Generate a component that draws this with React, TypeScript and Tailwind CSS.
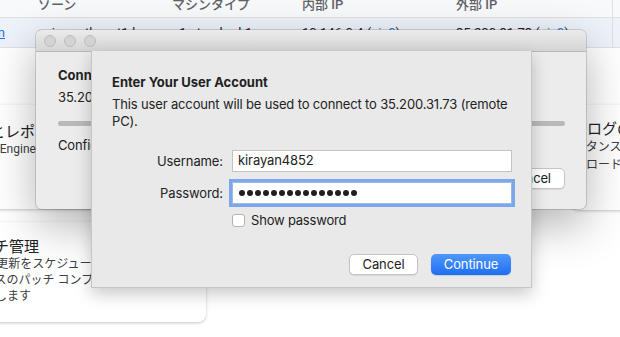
export default function App() {
  const dots = Array.from({ length: 15 });

  return (
    <div className="relative w-[620px] h-[337px] overflow-hidden bg-white font-['Roboto','Noto_Sans_CJK_JP',sans-serif]">
      {/* background console table */}
      <div className="grid grid-cols-[38px_134px_130px_154px_156px_1fr] h-[18px] items-start bg-[#f8f9fa] border-b border-[#e0e0e0] text-[13px] font-medium text-[#5f6368]">
        <div />
        <div className="-mt-[2px] leading-[14px]">ゾーン</div>
        <div className="-mt-[2px] leading-[14px]">マシンタイプ</div>
        <div className="-mt-[2px] leading-[14px]">内部 IP</div>
        <div className="-mt-[2px] leading-[14px]">外部 IP</div>
        <div className="h-full border-l border-[#e0e0e0]" />
      </div>
      <div className="grid grid-cols-[38px_134px_130px_154px_156px_1fr] h-[30px] items-center bg-[#eef2fb] border-b border-[#e0e0e0] text-[13px] text-[#202124]">
        <div className="w-[80px] -ml-[75px] text-right text-[#1a73e8] underline whitespace-nowrap">rdp-win</div>
        <div className="whitespace-nowrap">asia-northeast1-b</div>
        <div className="whitespace-nowrap">n1-standard-1</div>
        <div className="whitespace-nowrap">
          10.146.0.4 (<span className="text-[#1a73e8]">nic0</span>)
        </div>
        <div className="whitespace-nowrap">
          35.200.31.73 (<span className="text-[#1a73e8]">nic0</span>)
        </div>
        <div className="h-full border-l border-[#e0e0e0]" />
      </div>

      {/* getting-started cards */}
      <div className="mt-[57px] -ml-[50px] grid grid-cols-[256px_340px_150px] gap-x-[12px] gap-y-[12px] text-[#202124]">
        <div className="h-[104px] rounded-[8px] bg-white shadow-[0_1px_3px_rgba(60,64,67,0.3)] pl-4 pt-[18px] whitespace-nowrap">
          <div className="-ml-[6px] text-[15px] leading-[18px]">指標とレポート</div>
          <div className="-ml-[18px] text-[12px] leading-[17px] text-[#3c4043]">Compute Engine の指標を表示</div>
        </div>
        <div />
        <div className="h-[105px] rounded-[8px] bg-white shadow-[0_1px_3px_rgba(60,64,67,0.3)] pl-4 pt-[15px] whitespace-nowrap">
          <div className="ml-[1px] text-[15px] leading-[18px]">ログの表示</div>
          <div className="-ml-[36px] text-[12px] leading-[18px] text-[#3c4043]">インスタンスのログ</div>
          <div className="-ml-[36px] text-[12px] leading-[18px] text-[#3c4043]">ダウンロード</div>
        </div>
        <div className="h-[100px] rounded-[8px] bg-white shadow-[0_1px_3px_rgba(60,64,67,0.3)] pl-4 pt-[16px] whitespace-nowrap">
          <div className="-ml-[2px] text-[15px] leading-[18px]">パッチ管理</div>
          <div className="text-[12px] leading-[16px] text-[#3c4043]">OS の更新をスケジュールし、</div>
          <div className="-ml-[31px] text-[12px] leading-[16px] text-[#3c4043]">インスタンスのパッチ コンプライアンスを</div>
          <div className="ml-[5px] text-[12px] leading-[16px] text-[#3c4043]">確認します</div>
        </div>
      </div>

      {/* back window: connecting */}
      <div className="absolute left-[36px] top-[30px] w-[550px] h-[179px] flex flex-col overflow-hidden rounded-[6px] bg-[#ececec] shadow-[0_16px_45px_rgba(0,0,0,0.3),0_0_0_1px_rgba(0,0,0,0.14)] font-['Inter','Noto_Sans',sans-serif] text-[13px] text-[#222]">
        <div className="h-[22px] flex-none flex items-center gap-[8px] pl-[8px] bg-gradient-to-b from-[#ebebeb] to-[#d5d5d5] border-b border-[#b8b8b8]">
          <span className="w-[12px] h-[12px] rounded-full bg-[#d3d3d3] border border-[#bcbcbc]" />
          <span className="w-[12px] h-[12px] rounded-full bg-[#d3d3d3] border border-[#bcbcbc]" />
          <span className="w-[12px] h-[12px] rounded-full bg-[#d3d3d3] border border-[#bcbcbc]" />
        </div>
        <div className="flex flex-col px-[22px] pt-[15px]">
          <div className="font-bold leading-[16px]">Connecting to 35.200.31.73</div>
          <div className="mt-[6px] leading-[16px] tracking-[-0.15px]">35.200.31.73</div>
          <div className="mt-[16px] h-[5px] w-[507px] rounded-full bg-[#b9b9b9]" />
          <div className="mt-[11px] leading-[16px] tracking-[-0.15px]">Configuring remote PC...</div>
          <div className="mt-[15px] flex justify-end">
            <div className="w-[70px] h-[21px] -mr-[1px] flex items-center justify-center rounded-[5px] bg-white border border-[#c4c4c4] shadow-[0_1px_1px_rgba(0,0,0,0.08)] tracking-[-0.15px]">
              Cancel
            </div>
          </div>
        </div>
      </div>

      {/* sheet: user account */}
      <div className="absolute left-[91px] top-[51px] w-[441px] h-[237px] flex flex-col px-[20px] pt-[23px] bg-[#e9e9e9] border-x border-b border-[#c6c6c6] shadow-[0_6px_16px_rgba(0,0,0,0.22)] font-['Inter','Noto_Sans',sans-serif] text-[13px] text-[#222]">
        <div className="font-bold leading-[16px]">Enter Your User Account</div>
        <div className="mt-[6px] leading-[17px] whitespace-nowrap tracking-[-0.15px]">
          This user account will be used to connect to 35.200.31.73 (remote
          <br />
          PC).
        </div>

        <div className="mt-[20px] grid grid-cols-[111px_280px] gap-x-[9px] gap-y-[10px] items-center">
          <div className="text-right leading-[16px] tracking-[-0.1px]">Username:</div>
          <div className="h-[22px] flex items-center pl-[5px] bg-white border border-[#c3c3c3] tracking-[-0.1px]">kirayan4852</div>
          <div className="text-right leading-[16px] tracking-[-0.1px]">Password:</div>
          <div className="h-[22px] flex items-center gap-[2px] pl-[6px] bg-white border border-[#9fb9e6] ring-[3px] ring-[#7ca6ee]">
            {dots.map((_, i) => (
              <span key={i} className="w-[6px] h-[6px] rounded-full bg-[#1f1f1f]" />
            ))}
          </div>
        </div>

        <div className="mt-[8px] ml-[120px] flex items-center gap-[6px]">
          <span className="w-[13px] h-[13px] rounded-[3px] bg-white border border-[#b3b3b3]" />
          <span className="leading-[16px] tracking-[-0.2px]">Show password</span>
        </div>

        <div className="mt-[26px] flex justify-end gap-[13px]">
          <div className="w-[69px] h-[21px] flex items-center justify-center rounded-[5px] bg-white border border-[#c4c4c4] shadow-[0_1px_1px_rgba(0,0,0,0.08)] tracking-[-0.1px]">
            Cancel
          </div>
          <div className="w-[80px] h-[21px] flex items-center justify-center rounded-[5px] bg-gradient-to-b from-[#4f97fb] to-[#1d6ef4] text-white shadow-[0_1px_1px_rgba(0,0,0,0.12)] tracking-[-0.1px]">
            Continue
          </div>
        </div>
      </div>
    </div>
  );
}
